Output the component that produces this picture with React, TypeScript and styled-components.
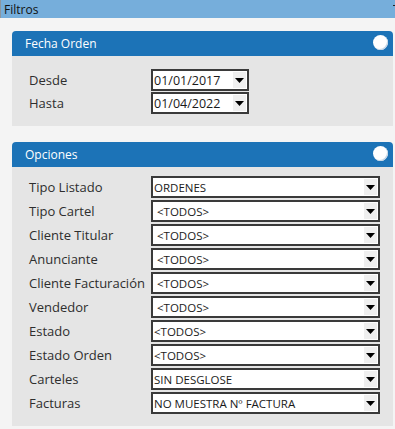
import React from "react";
import styled, {createGlobalStyle} from "styled-components";

const GlobalStyle = createGlobalStyle`
  body {
    margin: 0;
    background: #f4f4f4;
    font-family: "Liberation Sans", Arial, sans-serif;
  }
`

type SelectRow = {
    label: string;
    value: string;
    indent?: boolean;
}

const options: SelectRow[] = [
    {label: "Tipo Listado", value: "ORDENES"},
    {label: "Tipo Cartel", value: "<TODOS>", indent: true},
    {label: "Cliente Titular", value: "<TODOS>", indent: true},
    {label: "Anunciante", value: "<TODOS>", indent: true},
    {label: "Cliente Facturación", value: "<TODOS>", indent: true},
    {label: "Vendedor", value: "<TODOS>", indent: true},
    {label: "Estado", value: "<TODOS>"},
    {label: "Estado Orden", value: "<TODOS>"},
    {label: "Carteles", value: "SIN DESGLOSE"},
    {label: "Facturas", value: "NO MUESTRA Nº FACTURA"},
];

const Arrow = () => <ArrowBox>
    <svg width="9" height="5" viewBox="0 0 9 5"><polygon points="0,0 9,0 4.5,5" fill="#000"/></svg>
</ArrowBox>

export default function App() {
    return <Page>
        <GlobalStyle/>
        <TopBar>
            <span>Filtros</span>
            <Toggle/>
        </TopBar>
        <Content>
            <Panel>
                <PanelHeader>
                    <span>Fecha Orden</span>
                    <Knob/>
                </PanelHeader>
                <PanelBody $top={13} $bottom={12}>
                    <Row $gap={1}>
                        <Label>Desde</Label>
                        <DateBox><DateText>01/01/2017</DateText><Arrow/></DateBox>
                    </Row>
                    <Row $gap={1}>
                        <Label>Hasta</Label>
                        <DateBox><DateText>01/04/2022</DateText><Arrow/></DateBox>
                    </Row>
                </PanelBody>
            </Panel>
            <Panel>
                <PanelHeader>
                    <span>Opciones</span>
                    <Knob/>
                </PanelHeader>
                <PanelBody $top={9} $bottom={12}>
                    {options.map(o => <Row key={o.label} $gap={2}>
                        <Label>{o.label}</Label>
                        <SelectBox>
                            <SelectText $indent={o.indent}>{o.value}</SelectText>
                            <Arrow/>
                        </SelectBox>
                    </Row>)}
                </PanelBody>
            </Panel>
        </Content>
    </Page>
}

const Page = styled.div`
  width: 395px;
  height: 429px;
  overflow: hidden;
  background: #f4f4f4;
`

const TopBar = styled.div`
  position: relative;
  height: 18px;
  background: #76aedb;
  border-left: 1px solid #8c96a0;
  display: flex;
  align-items: center;
  padding-left: 3px;
  font-family: "Open Sans", sans-serif;
  font-size: 12px;
  color: #111;
`

const Toggle = styled.i`
  position: absolute;
  right: 0;
  top: 5px;
  width: 2px;
  height: 1px;
  background: #222;
`

const Content = styled.div`
  padding: 13px 2px 0 12px;
  display: flex;
  flex-direction: column;
  gap: 16px;
`

const Panel = styled.div`
  display: flex;
  flex-direction: column;
`

const PanelHeader = styled.div`
  height: 25px;
  background: #1c73b7;
  border-radius: 4px 4px 0 0;
  display: flex;
  align-items: center;
  justify-content: space-between;
  padding: 0 5px 0 13px;
  color: #fff;
  font-family: "Open Sans", sans-serif;
  font-size: 12px;
`

const Knob = styled.div`
  width: 15px;
  height: 15px;
  border-radius: 50%;
  background: #fff;
  box-shadow: inset -1px -1px 0 #c6d6e6;
  margin-top: -2px;
`

const PanelBody = styled.div<{ $top: number; $bottom: number }>`
  background: #e5e5e5;
  padding: ${p => p.$top}px 0 ${p => p.$bottom}px 17px;
  display: flex;
  flex-direction: column;
`

const Row = styled.div<{ $gap: number }>`
  display: grid;
  grid-template-columns: 122px auto;
  align-items: center;
  margin-bottom: ${p => p.$gap}px;

  &:last-child {
    margin-bottom: 0;
  }
`

const Label = styled.span`
  font-family: "Open Sans", sans-serif;
  font-size: 13px;
  color: #2e2e2e;
`

const DateBox = styled.div`
  box-sizing: border-box;
  width: 98px;
  height: 22px;
  border: 2px solid #3a3a3a;
  background: #fff;
  display: flex;
  align-items: center;
`

const DateText = styled.span`
  flex: 1;
  padding-left: 1px;
  font-family: "Open Sans", sans-serif;
  font-size: 12.5px;
  color: #1a1a1a;
`

const SelectBox = styled.div`
  box-sizing: border-box;
  width: 229px;
  height: 22px;
  border: 2px solid #3a3a3a;
  background: #fff;
  display: flex;
  align-items: center;
`

const SelectText = styled.span<{ $indent?: boolean }>`
  flex: 1;
  padding-left: ${p => p.$indent ? 4 : 1}px;
  font-family: "Open Sans", sans-serif;
  font-size: 11.5px;
  color: #1a1a1a;
`

const ArrowBox = styled.div`
  width: 13px;
  height: 16px;
  margin-right: 1px;
  background: #efefef;
  display: flex;
  align-items: center;
  justify-content: center;
`
